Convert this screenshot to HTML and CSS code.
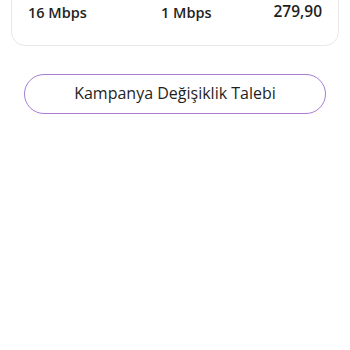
FILE: index.html
```html
<!DOCTYPE html>
<html lang="tr">
<head>
<meta charset="utf-8">
<link rel="stylesheet" href="styles.css">
</head>
<body>
<div class="card">
  <div class="row">
    <span class="val">16 Mbps</span>
    <span class="val mid">1 Mbps</span>
    <span class="val price">279,90</span>
  </div>
</div>
<button class="btn">Kampanya Değişiklik Talebi</button>
</body>
</html>
```
FILE: styles.css
```css
html, body {
  margin: 0;
  padding: 0;
  background: #ffffff;
}
body {
  font-family: "Open Sans", "Noto Sans", sans-serif;
  color: #1f1f1f;
}
.card {
  margin: -20px 11px 0;
  padding: 22px 16px 22px;
  border: 1px solid #e8e8e8;
  border-radius: 14px;
}
.row {
  display: grid;
  grid-template-columns: 133px 1fr auto;
  align-items: end;
  line-height: 20px;
}
.val {
  font-size: 14.5px;
  font-weight: 600;
}
.price {
  font-size: 15.5px;
  position: relative;
  top: -2px;
}
.btn {
  display: block;
  box-sizing: border-box;
  width: calc(100% - 48px);
  margin: 28px 24px 0;
  height: 40px;
  border: 1px solid #a77bd6;
  border-radius: 20px;
  background: #fff;
  font-family: "Open Sans", "Noto Sans", sans-serif;
  font-size: 16px;
  color: #1f1f1f;
  padding: 0 0 2px;
}
```
